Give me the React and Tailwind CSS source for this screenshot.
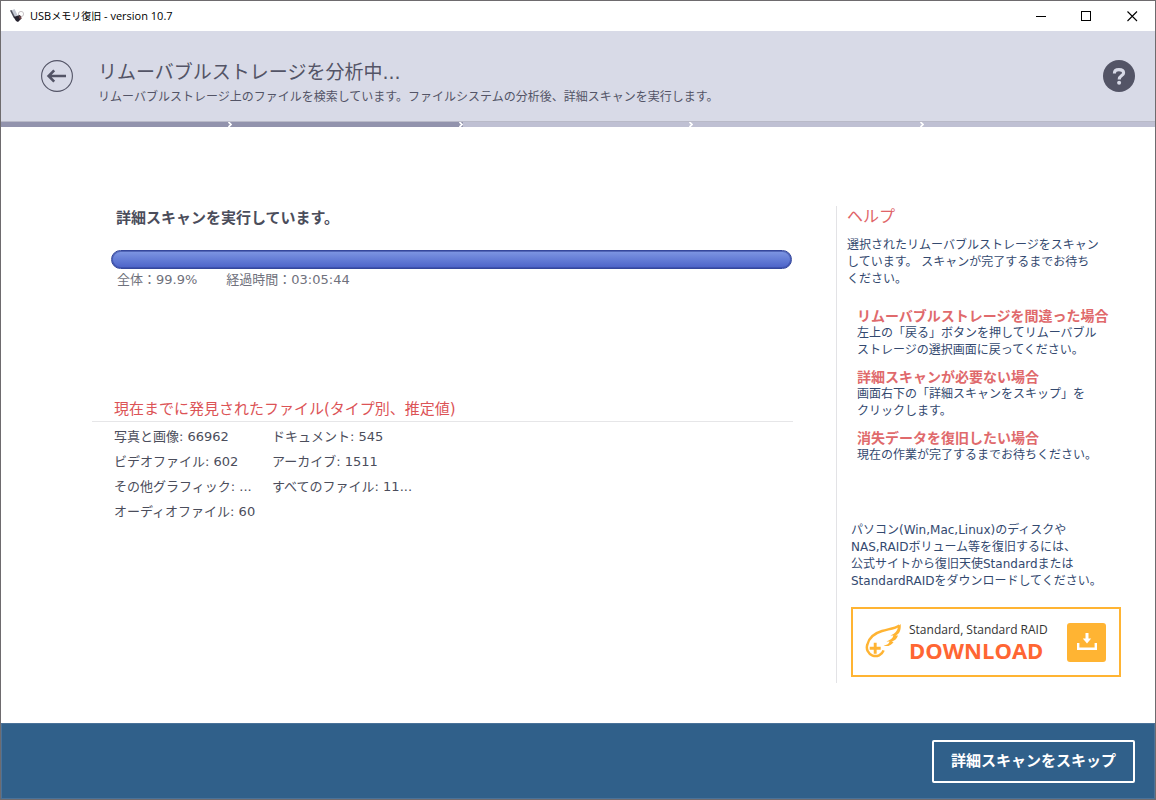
import React from "react";

const fileCounts = [
  ["写真と画像", "66962"],
  ["ドキュメント", "545"],
  ["ビデオファイル", "602"],
  ["アーカイブ", "1511"],
  ["その他グラフィック", "..."],
  ["すべてのファイル", "11..."],
  ["オーディオファイル", "60"],
];

const helpTopics = [
  {
    title: "リムーバブルストレージを間違った場合",
    lines: ["左上の「戻る」ボタンを押してリムーバブル", "ストレージの選択画面に戻ってください。"],
  },
  {
    title: "詳細スキャンが必要ない場合",
    lines: ["画面右下の「詳細スキャンをスキップ」を", "クリックします。"],
  },
  {
    title: "消失データを復旧したい場合",
    lines: ["現在の作業が完了するまでお待ちください。"],
  },
];

function Lines({ lines }) {
  return lines.map((line) => (
    <span key={line} className="block whitespace-nowrap">
      {line}
    </span>
  ));
}

function TitleBar() {
  const button = "flex h-[30px] w-[46px] items-center justify-center hover:bg-gray-200";
  return (
    <div className="flex h-[30px] items-center bg-white">
      <svg className="ml-2 h-4 w-4" viewBox="0 0 16 16" aria-hidden="true">
        <circle cx="12" cy="6" r="2.6" fill="none" stroke="#c9c4c8" strokeWidth="1" />
        <path d="M2.5 2.5 5.5 1 9 8 5 9.5Z" fill="#c3c7d2" />
        <path d="M1 2.5 2.5 2 6 9 4.5 9.5Z" fill="#4a4b58" />
        <path d="M4.5 9 11 7 12.5 10.5 9 14 7 13Z" fill="#25222e" />
        <path d="M9.5 8.5 12 8 12.5 10.5 11 11.5Z" fill="#6b4145" />
      </svg>
      <h1 className="ml-[5px] flex-1 whitespace-nowrap font-['Open_Sans','Noto_Sans_CJK_JP',sans-serif] text-[11px] text-black">
        USB<span className="text-[10px]">メモリ復旧</span> - version 10.7
      </h1>
      <button type="button" aria-label="最小化" className={button}>
        <svg className="h-[11px] w-[11px]" viewBox="0 0 11 11" shapeRendering="crispEdges">
          <path d="M1 5.5H11" stroke="#000" />
        </svg>
      </button>
      <button type="button" aria-label="最大化" className={button}>
        <svg className="h-[11px] w-[11px]" viewBox="0 0 11 11" shapeRendering="crispEdges">
          <rect x="0.5" y="0.5" width="9" height="9" fill="none" stroke="#000" />
        </svg>
      </button>
      <button type="button" aria-label="閉じる" className={button}>
        <svg className="h-[11px] w-[11px]" viewBox="0 0 11 11">
          <path d="M0.5 0.5 10 10M10 0.5 0.5 10" stroke="#000" strokeWidth="1.1" />
        </svg>
      </button>
    </div>
  );
}

function Header() {
  return (
    <header>
      <div className="flex h-[90px] items-center bg-[#d8dae7] pr-5 pl-10 text-[#535466]">
        <button type="button" aria-label="戻る" className="shrink-0">
          <svg className="h-8 w-8" viewBox="0 0 32 32" fill="none" stroke="#535466">
            <circle cx="16" cy="16" r="15.4" strokeWidth="1.1" />
            <path d="M8 16H25M13.2 10.3 7.6 16 13.2 21.7" strokeWidth="2.6" />
          </svg>
        </button>
        <div className="ml-[25px] flex-1 pt-4">
          <h2 className="text-[19px] leading-[26px]">リムーバブルストレージを分析中...</h2>
          <p className="text-[12px] leading-6">
            リムーバブルストレージ上のファイルを検索しています。ファイルシステムの分析後、詳細スキャンを実行します。
          </p>
        </div>
        <button type="button" aria-label="ヘルプ" className="shrink-0">
          <svg className="h-8 w-8" viewBox="0 0 32 32" fill="none">
            <circle cx="16" cy="16" r="16" fill="#535466" />
            <path d="M11.4 13.4C11.4 10.8 13.2 9.6 15.9 9.6S20.6 10.8 20.6 12.9C20.6 15.6 16.2 15.6 16.2 19.4" stroke="#d8dae7" strokeWidth="3.1" />
            <circle cx="16.1" cy="22.8" r="2" fill="#d8dae7" />
          </svg>
        </button>
      </div>
      <ol className="grid h-[6px] grid-cols-5 border-t border-[#b9bac8]" aria-label="進行状況">
        {[true, true, false, false, false].map((done, i) => (
          <li key={i} className={done ? "flex justify-end bg-[#9293ad]" : "flex justify-end bg-[#bfc0d3]"}>
            {i < 4 && (
              <svg className="h-[5px] w-[4px]" viewBox="0 0 4 5" fill="none">
                <path d="M0.5 0 3 2.5 0.5 5" stroke="#fff" strokeWidth="1.7" />
              </svg>
            )}
          </li>
        ))}
      </ol>
    </header>
  );
}

function ScanStatus() {
  return (
    <section className="flex-1 pr-[43px] pl-[91px] text-[#4b4d5b]">
      <h3 className="pl-6 text-[15px] leading-6 font-bold">詳細スキャンを実行しています。</h3>
      <div
        role="progressbar"
        aria-label="詳細スキャン"
        aria-valuenow={99.9}
        className="mt-5 mr-px ml-[19px] h-[19px] rounded-full border border-[#35479c] bg-linear-to-b from-[#7f97e3] to-[#4c62c8] ring-1 ring-[#35479c]/60 ring-inset"
      />
      <p className="flex gap-[29px] pl-[25px] text-[13px] leading-[22px] text-[#6f717c]">
        <span>全体：99.9%</span>
        <span>経過時間：03:05:44</span>
      </p>
      <h3 className="mt-[106px] border-b border-[#e6e6e8] pl-[22px] text-[15px] leading-6 text-[#dc5356]">
        現在までに発見されたファイル(タイプ別、推定値)
      </h3>
      <ul className="mt-[2px] grid grid-cols-[158px_1fr] pl-[22px] text-[13px] leading-[25px]">
        {fileCounts.map(([label, count]) => (
          <li key={label} className="whitespace-nowrap">
            {label}: {count}
          </li>
        ))}
      </ul>
    </section>
  );
}

function HelpPanel() {
  return (
    <aside className="w-[319px] shrink-0 border-l border-[#e3e3e6] pt-px pb-[6px] pl-[10px] text-[12px] leading-[17px] text-[#33496f]">
      <h3 className="text-[16px] leading-5 text-[#e06468]">ヘルプ</h3>
      <p className="mt-[10px]">
        <Lines lines={["選択されたリムーバブルストレージをスキャン", "しています。 スキャンが完了するまでお待ち", "ください。"]} />
      </p>
      <dl className="mt-5 flex flex-col gap-[10px] pl-[10px]">
        {helpTopics.map((topic) => (
          <div key={topic.title}>
            <dt className="text-[14px] font-bold whitespace-nowrap text-[#e06a6c]">{topic.title}</dt>
            <dd>
              <Lines lines={topic.lines} />
            </dd>
          </div>
        ))}
      </dl>
      <div className="mt-[58px] pl-1">
        <p>
          <Lines
            lines={[
              "パソコン(Win,Mac,Linux)のディスクや",
              "NAS,RAIDボリューム等を復旧するには、",
              "公式サイトから復旧天使Standardまたは",
              "StandardRAIDをダウンロードしてください。",
            ]}
          />
        </p>
        <a
          href="#download"
          className="mt-[17px] flex h-[70px] w-[270px] items-center border-2 border-[#ffb433] bg-white pr-[13px] pl-3 font-['Open_Sans','Noto_Sans',sans-serif]"
        >
          <svg className="h-9 w-9" viewBox="0 0 36 36" fill="none" stroke="#ffb433">
            <path d="M18.6 26.4A8.6 8.6 0 1 1 2.4 20.5C4.2 13 9.5 9.2 17 7 23.5 5 30 4.5 34.4 1.4" strokeWidth="2.5" />
            <path d="M10.2 18.8V29.8M4.7 24.3H15.7" strokeWidth="2.9" />
            <path d="M35.6 0C36.4 6.4 34 10.2 30.6 11.4L33 11.6C31.6 15.4 29.4 17 26.6 17.4L28.6 17.9C26.4 21.4 23 22.6 18.6 21.8 22 21.2 24 19.8 24.6 17.6L21.4 17.4C25.4 16.4 27.8 14.4 28.4 11.6L25.4 11.4C30 10 32.6 7 33 2.6Z" fill="#ffb433" stroke="none" />
          </svg>
          <span className="ml-2 flex-1 whitespace-nowrap">
            <span className="block text-[12px] leading-4 text-[#333333]">Standard, Standard RAID</span>
            <span className="block text-[22px] leading-6 font-bold text-[#ff6633]">DOWNLOAD</span>
          </span>
          <span className="flex h-[39px] w-[39px] items-center justify-center rounded-[3px] bg-[#ffb433]">
            <svg className="h-5 w-5" viewBox="0 0 20 20" fill="none" stroke="#fff">
              <path d="M1.2 11V16.8H18.8V11" strokeWidth="2.4" />
              <path d="M10 1V8" strokeWidth="3" />
              <path d="M5.8 6.6H14.2L10 11.6Z" fill="#fff" stroke="none" />
            </svg>
          </span>
        </a>
      </div>
    </aside>
  );
}

export default function App() {
  return (
    <div
      lang="ja"
      className="flex min-h-screen flex-col border border-[#6e6b6e] bg-white font-['DejaVu_Sans','Noto_Sans_CJK_JP',sans-serif]"
    >
      <TitleBar />
      <Header />
      <main className="flex flex-1 items-start pt-[79px] pb-10">
        <ScanStatus />
        <HelpPanel />
      </main>
      <footer className="flex h-[76px] items-center justify-end border border-[#4a7299] bg-[#30608a] pr-[19px]">
        <button
          type="button"
          className="h-[43px] rounded-[2px] border-2 border-white px-[17px] text-[15px] font-bold text-white"
        >
          詳細スキャンをスキップ
        </button>
      </footer>
    </div>
  );
}
